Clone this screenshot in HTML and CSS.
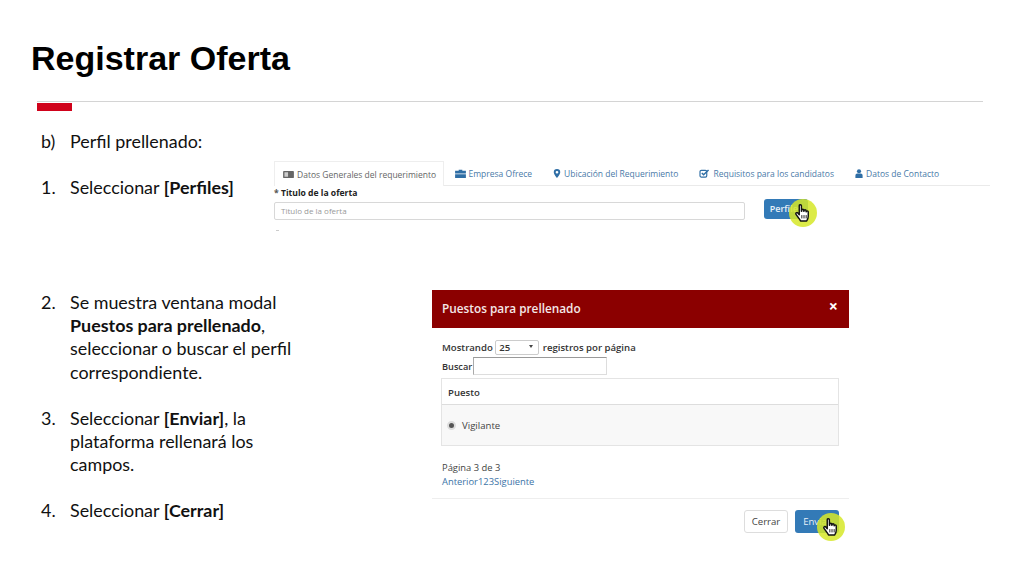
FILE: index.html
```html
<!DOCTYPE html>
<html lang="es">
<head>
<meta charset="utf-8">
<title>Registrar Oferta</title>
<link rel="stylesheet" href="styles.css">
</head>
<body>
<svg class="defs" width="0" height="0" aria-hidden="true">
  <symbol id="hand" viewBox="0 0 24 24">
    <path d="M7.5 3.2c0-1.6 2.6-1.6 2.6 0V10h.3V8.6c0-1.5 2.5-1.5 2.5 0V10h.3V9.2c0-1.5 2.5-1.5 2.5 0V10.5h.2c0-1.4 2.4-1.4 2.4 0V16c0 3-1.8 5.5-1.8 5.5H9s-1-2-2.2-3.5L3.6 13.6c-1-1.4 1-2.9 2.2-1.5l1.7 1.9z" fill="#fff" stroke="#111" stroke-width="1.7" stroke-linejoin="round"/>
    <path d="M10.6 14.5v4M13.2 14.5v4M15.8 14.5v4" fill="none" stroke="#111" stroke-width="1.1"/>
  </symbol>
</svg>
<main class="slide">
  <header class="head">
    <h1 class="title">Registrar Oferta</h1>
    <div class="rule"><span class="mark"></span></div>
  </header>
  <div class="body">
    <div class="notes">
      <p class="item gap-2"><span class="num">b)</span><span>Perfil prellenado:</span></p>
      <p class="item gap-5"><span class="num">1.</span><span>Seleccionar <b>[Perfiles]</b></span></p>
      <p class="item gap-2"><span class="num">2.</span><span>Se muestra ventana modal <b>Puestos para prellenado</b>, seleccionar o buscar el perfil correspondiente.</span></p>
      <p class="item gap-2"><span class="num">3.</span><span>Seleccionar <b>[Enviar]</b>, la plataforma rellenará los campos.</span></p>
      <p class="item"><span class="num">4.</span><span>Seleccionar <b>[Cerrar]</b></span></p>
    </div>
    <div class="shots">
      <section class="form-shot">
        <nav class="tabs">
          <span class="tab active">
            <svg class="tab-ico" viewBox="0 0 12 10"><rect y="1" width="12" height="8" rx="1" fill="#666"/><rect x="1.5" y="2.5" width="4" height="5" fill="#ccc"/></svg>Datos Generales del requerimiento</span>
          <span class="tab">
            <svg class="tab-ico" viewBox="0 0 12 10"><path d="M4 2V.8h4V2h4v3H0V2zM0 5.8h12V10H0z" fill="#2f6ea5"/></svg>Empresa Ofrece</span>
          <span class="tab">
            <svg class="tab-ico narrow" viewBox="0 0 8 10"><path d="M4 0a3.6 3.6 0 0 1 3.6 3.6C7.6 6 4 10 4 10S.4 6 .4 3.6A3.6 3.6 0 0 1 4 0zm0 2.1a1.5 1.5 0 1 0 0 3 1.5 1.5 0 0 0 0-3z" fill="#2f6ea5" fill-rule="evenodd"/></svg>Ubicación del Requerimiento</span>
          <span class="tab">
            <svg class="tab-ico" viewBox="0 0 12 10"><rect x="1" y="1.5" width="7.5" height="7.5" rx="1.5" fill="none" stroke="#2f6ea5" stroke-width="1.3"/><path d="M3 4.5l2 2L10.5 1" fill="none" stroke="#2f6ea5" stroke-width="1.6"/></svg>Requisitos para los candidatos</span>
          <span class="tab">
            <svg class="tab-ico narrow" viewBox="0 0 8 10"><circle cx="4" cy="2.5" r="2.3" fill="#2f6ea5"/><path d="M0 10V7.5C0 5.8 1 5 2 5h4c1 0 2 .8 2 2.5V10z" fill="#2f6ea5"/></svg>Datos de Contacto</span>
        </nav>
        <div class="field-label"><span class="req">*</span> Titulo de la oferta</div>
        <div class="field-row">
          <div class="fake-input">Titulo de la oferta</div>
          <div class="btn btn-primary btn-perfiles">Perfiles
            <span class="pointer"><svg class="hand"><use href="#hand"/></svg></span>
          </div>
        </div>
        <div class="tick"></div>
      </section>
      <section class="modal">
        <div class="modal-head"><span>Puestos para prellenado</span><span class="close">×</span></div>
        <div class="modal-body">
          <div class="show-row">Mostrando <span class="select">25<i class="caret"></i></span> registros por página</div>
          <div class="search-row">Buscar<span class="search"></span></div>
          <div class="table">
            <div class="th">Puesto</div>
            <div class="td"><span class="radio"></span>Vigilante</div>
          </div>
          <div class="pager">Página 3 de 3</div>
          <div class="links">Anterior123Siguiente</div>
        </div>
        <div class="modal-foot">
          <div class="btn btn-default">Cerrar</div>
          <div class="btn btn-primary btn-enviar">Enviar
            <span class="pointer"><svg class="hand"><use href="#hand"/></svg></span>
          </div>
        </div>
      </section>
    </div>
  </div>
</main>
</body>
</html>
```
FILE: styles.css
```css
* { box-sizing: border-box; }
html, body { margin: 0; padding: 0; background: #fff; }
.defs { position: absolute; }
.slide {
  width: 1024px;
  height: 576px;
  overflow: hidden;
  background: #fff;
  font-family: Lato, "Open Sans", sans-serif;
  color: #111;
}
.head { padding: 38px 41px 0 37px; }
.title {
  margin: 0 0 0 -6px;
  font: bold 34px/41px "Liberation Sans", Arial, sans-serif;
  color: #000;
}
.rule {
  position: relative;
  margin-top: 22px;
  height: 1px;
  background: #d4d4d4;
}
.mark {
  position: absolute;
  left: 0;
  top: 2px;
  width: 35px;
  height: 8px;
  background: #d0021b;
}
.body {
  display: grid;
  grid-template-columns: 233px 1fr;
  padding: 28px 0 0 41px;
}
.notes { width: 259px; font-size: 17.9px; line-height: 23.1px; }
.item { display: flex; margin: 0; }
.item.gap-2 { margin-bottom: 23.1px; }
.item.gap-5 { margin-bottom: 92px; }
.num { width: 29px; flex: none; }
.item b { font-weight: 700; }

.shots { padding-top: 31px; font-family: "Open Sans", sans-serif; }
.form-shot { width: 716px; height: 128px; }
.tabs {
  display: flex;
  height: 25px;
  border-bottom: 1px solid #eaeaea;
  font-size: 8.5px;
  color: #4a7aa8;
}
.tab { display: flex; align-items: center; padding: 0 10.5px; white-space: nowrap; }
.tab.active {
  padding: 0 8px;
  width: 170px;
  color: #666;
  background: #fff;
  border: 1px solid #eee;
  border-bottom: 0;
  height: 25px;
}
.tab-ico { width: 11px; height: 9px; margin-right: 3px; flex: none; }
.tab-ico.narrow { width: 8px; }
.field-label { margin-top: 1px; font-size: 8.6px; line-height: 12px; font-weight: 700; color: #222; }
.req { color: #555; }
.field-row { display: flex; align-items: flex-start; }
.fake-input {
  width: 471px;
  height: 18px;
  margin-top: 3px;
  padding-left: 6px;
  border: 1px solid #d8d8d8;
  border-radius: 2px;
  font-size: 8px;
  line-height: 16px;
  color: #999;
}
.tick { width: 3px; height: 1px; margin: 10px 0 0 2px; background: #ccc; }
.btn {
  position: relative;
  text-align: center;
  border-radius: 3px;
  white-space: nowrap;
}
.btn-primary { background: #337ab7; color: #e8f0f8; }
.btn-perfiles { width: 44px; height: 20px; margin-left: 19px; font-size: 9px; font-weight: 600; line-height: 20px; }
.pointer {
  position: absolute;
  width: 28px;
  height: 28px;
  border-radius: 50%;
  background: rgba(214, 232, 40, .85);
  display: flex;
  align-items: center;
  justify-content: center;
}
.btn-perfiles .pointer { left: 25px; top: 0; }
.hand { width: 20px; height: 20px; }

.modal { width: 417px; margin-top: 1px; margin-left: 158px; font-size: 9.6px; color: #333; }
.modal-head {
  display: flex;
  justify-content: space-between;
  height: 38px;
  padding: 0 11px 0 10px;
  background: #8b0000;
  color: #f4e8e8;
  font-size: 11.8px;
  font-weight: 600;
  line-height: 37px;
}
.close { font-size: 16px; line-height: 32px; font-weight: 700; color: #fff; }
.modal-body { padding: 11px 9px 0 10px; height: 170px; }
.show-row { height: 17px; line-height: 16px; font-weight: 600; display: flex; align-items: center; white-space: pre; }
.select {
  position: relative;
  width: 44px;
  height: 15px;
  margin-right: 1px;
  padding-left: 3px;
  border: 1px solid #ccc;
  border-radius: 2px;
  line-height: 13px;
}
.caret {
  position: absolute;
  right: 5px;
  top: 4px;
  border: 2px solid transparent;
  border-top: 3px solid #444;
  border-bottom: 0;
}
.search-row { display: flex; height: 21px; font-size: 9.2px; font-weight: 600; line-height: 19px; margin-top: 1px; }
.search { width: 134px; height: 18px; margin-left: 1px; border: 1px solid #ddd; border-top-color: #999; border-left-color: #aaa; }
.table { width: 398px; margin-left: -1px; border: 1px solid #e4e4e4; }
.th { height: 26px; padding: 1px 0 0 6px; font-weight: 600; line-height: 26px; border-bottom: 1px solid #ddd; }
.td { display: flex; align-items: center; height: 40px; padding-left: 5px; background: #f8f8f8; color: #444; }
.radio {
  width: 9px;
  height: 9px;
  margin-right: 6px;
  border-radius: 50%;
  border: 2px solid #ddd;
  background: #555;
}
.pager { margin-top: 15px; font-size: 9.4px; line-height: 14px; color: #444; }
.links { font-size: 9.4px; line-height: 14px; color: #3d74a8; }
.modal-foot {
  display: flex;
  justify-content: flex-end;
  gap: 7px;
  height: 42px;
  padding: 11px 10px 0 0;
  border-top: 1px solid #eee;
}
.modal-foot .btn { width: 44px; height: 23px; font-size: 9.6px; line-height: 23px; }
.btn-default { border: 1px solid #ddd; line-height: 21px !important; color: #444; }
.btn-enviar .pointer { left: 22px; top: 3px; }
```
